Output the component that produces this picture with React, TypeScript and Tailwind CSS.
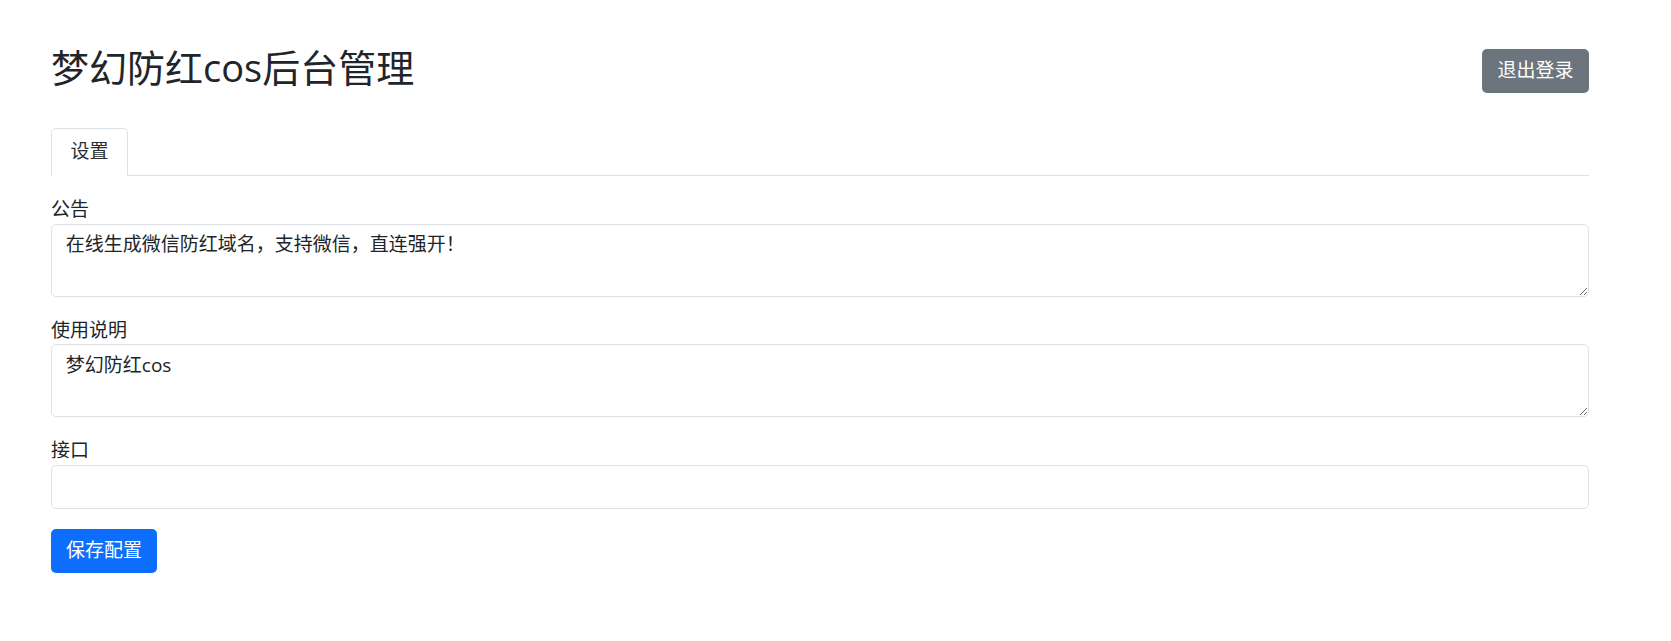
import React from "react";

export default function App() {
  return (
    <div className="min-h-[641px] bg-white pl-[51px] pr-[82px] pt-[45px] text-[#212529] font-['Open_Sans','Noto_Sans_CJK_SC',sans-serif]">
      <div className="flex items-start justify-between">
        <h2 className="m-0 text-[38px] leading-[44px] font-normal">梦幻防红cos后台管理</h2>
        <button className="mt-[4px] h-[44px] rounded-[5px] bg-[#6c757d] px-[15.5px] text-[19px] leading-[27.6px] text-white">
          退出登录
        </button>
      </div>

      <ul className="mt-[35px] flex border-b border-[#dee2e6]">
        <li className="-mb-px">
          <div className="rounded-t-[5px] border border-[#dee2e6] border-b-white bg-white px-[18.5px] py-[9.2px] text-[19px] leading-[27.6px] text-[#2b3035]">
            设置
          </div>
        </li>
      </ul>

      <div className="mt-[20px]">
        <div className="mb-[20px]">
          <label className="block text-[19px] leading-[27.6px]">公告</label>
          <textarea
            className="block h-[73px] w-full rounded-[5px] border border-[#dee2e6] px-[13.8px] py-[6.9px] text-[19px] leading-[27.6px] text-[#212529] outline-none"
            defaultValue="在线生成微信防红域名，支持微信，直连强开！"
          />
        </div>
        <div className="mb-[20px]">
          <label className="block text-[19px] leading-[27.6px]">使用说明</label>
          <textarea
            className="block h-[73px] w-full rounded-[5px] border border-[#dee2e6] px-[13.8px] py-[6.9px] text-[19px] leading-[27.6px] text-[#212529] outline-none"
            defaultValue="梦幻防红cos"
          />
        </div>
        <div className="mb-[20px]">
          <label className="block text-[19px] leading-[27.6px]">接口</label>
          <input
            className="block h-[44px] w-full rounded-[5px] border border-[#dee2e6] px-[13.8px] text-[19px] leading-[27.6px] text-[#212529] outline-none"
            defaultValue=""
          />
        </div>
        <button className="h-[44px] rounded-[5px] bg-[#0d6efd] px-[15px] text-[19px] leading-[27.6px] text-white">
          保存配置
        </button>
      </div>
    </div>
  );
}
